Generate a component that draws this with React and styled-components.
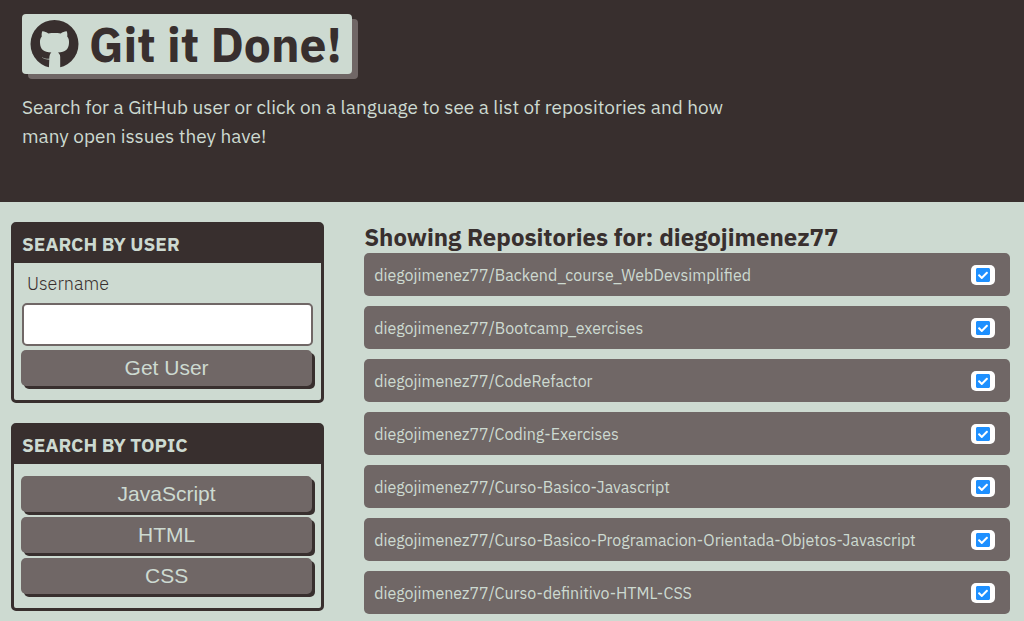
import React from "react";
import styled, { createGlobalStyle } from "styled-components";
import { FaCheckSquare } from "react-icons/fa";

const dark = "#382f2e";
const mid = "#706766";
const light = "#cddad1";

const GlobalStyle = createGlobalStyle`
  *, *::before, *::after { box-sizing: border-box; }
  body {
    margin: 0;
    background: ${light};
    color: ${dark};
    font-family: "IBM Plex Sans", "Open Sans", sans-serif;
    overflow-x: hidden;
  }
  h1, h2, h3, p, ul { margin: 0; padding: 0; }
`;

const Hero = styled.header`
  background: ${dark};
  color: ${light};
  min-height: 202px;
  padding: 14px 22px;
`;

const AppTitle = styled.h1`
  display: flex;
  align-items: center;
  gap: 10px;
  width: fit-content;
  height: 60px;
  padding: 0 10px 0 8px;
  border-radius: 4px;
  background: ${light};
  box-shadow: 6px 5px 0 ${mid};
  color: ${dark};
  font-size: 48px;
  font-weight: 700;
  line-height: 60px;
  white-space: nowrap;
`;

const Logo = styled.svg`
  width: 49px;
  height: 48px;
  flex: none;
`;

const Intro = styled.p`
  max-width: 720px;
  margin-top: 19px;
  font-size: 19px;
  line-height: 29px;
`;

const Layout = styled.main`
  display: grid;
  grid-template-columns: 32fr 66fr;
  gap: 40px;
  align-items: start;
  padding: 20px 14px 20px 11px;
`;

const Sidebar = styled.div`
  display: grid;
  gap: 20px;
`;

const Card = styled.section`
  border: 3px solid ${dark};
  border-radius: 5px;
  padding-bottom: 14px;
`;

const CardTitle = styled.h3`
  padding: 6px 8px;
  background: ${dark};
  color: ${light};
  font-size: 19px;
  font-weight: 700;
  line-height: 26px;
  text-transform: uppercase;
`;

const UserForm = styled.form`
  display: flex;
  flex-direction: column;
  padding: 8px 9px 0 7px;
`;

const FieldLabel = styled.label`
  padding: 0 6px;
  font-size: 18px;
  font-weight: 300;
  line-height: 26px;
`;

const TextField = styled.input`
  height: 43px;
  margin: 6px -1px 4px 1px;
  padding: 0 10px;
  border: 2px solid ${mid};
  border-radius: 5px;
  background: #fff;
  color: ${dark};
  font: inherit;
`;

const Button = styled.button`
  width: 100%;
  height: 36px;
  padding: 0;
  border: 0;
  border-radius: 5px;
  background: ${mid};
  box-shadow: 3px 3px 0 ${dark};
  color: ${light};
  font-family: "Liberation Sans", Arial, sans-serif;
  font-size: 21px;
  line-height: 36px;
  cursor: pointer;
`;

const TopicList = styled.div`
  display: grid;
  gap: 5px;
  padding: 12px 9px 0 7px;
`;

const Results = styled.section`
  min-width: 0;
`;

const ResultsTitle = styled.h2`
  font-size: 24px;
  font-weight: 700;
  line-height: 31px;
`;

const RepoList = styled.ul`
  display: grid;
  gap: 10px;
  list-style: none;
`;

const RepoItem = styled.li`
  display: flex;
`;

const RepoLink = styled.a`
  flex: 1;
  display: flex;
  align-items: center;
  justify-content: space-between;
  min-height: 43px;
  padding: 0 15px 0 10px;
  border-radius: 5px;
  background: ${mid};
  color: ${light};
  font-size: 16px;
  line-height: 24px;
  text-decoration: none;
`;

const Status = styled.span`
  display: flex;
  align-items: center;
  justify-content: center;
  flex: none;
  width: 24px;
  height: 20px;
  border-radius: 5px;
  background: #fff;
  color: #1e90ff;
  font-size: 16px;
`;

const topics = ["JavaScript", "HTML", "CSS"];
const user = "diegojimenez77";
const repos = [
  "Backend_course_WebDevsimplified",
  "Bootcamp_exercises",
  "CodeRefactor",
  "Coding-Exercises",
  "Curso-Basico-Javascript",
  "Curso-Basico-Programacion-Orientada-Objetos-Javascript",
  "Curso-definitivo-HTML-CSS",
];

function GithubMark() {
  return (
    <Logo viewBox="0 0 49 48" aria-hidden="true">
      <circle cx="24.5" cy="24" r="24" fill={dark} />
      <path
        fill={light}
        d="M12.3 11.2 C14 11 16.3 12 18.3 13.4 C22.3 12.8 26.7 12.8 30.7 13.4 C32.7 12 35 11 36.7 11.2 C37.4 13 37.5 14.8 37.2 16.5 C38.6 18.1 39.2 20.3 39 23 C38.7 29.3 35.5 32 28 32.5 C29.5 33.6 30.2 35 30.2 37 V48 H18.9 L19.3 39.4 C16.2 39.6 14.2 39.2 12 37.6 L12.3 37.2 C14.4 38.5 16.4 38.9 19.3 38.7 C19.3 35.7 19.9 33.7 21.4 32.5 C13.5 32 10.3 29.3 10 23 C9.8 20.3 10.4 18.1 11.8 16.5 C11.5 14.8 11.6 13 12.3 11.2 Z"
      />
    </Logo>
  );
}

export default function App() {
  return (
    <>
      <GlobalStyle />
      <Hero>
        <AppTitle>
          <GithubMark />
          Git it Done!
        </AppTitle>
        <Intro>
          Search for a GitHub user or click on a language to see a list of
          repositories and how many open issues they have!
        </Intro>
      </Hero>
      <Layout>
        <Sidebar>
          <Card>
            <CardTitle>Search by User</CardTitle>
            <UserForm onSubmit={(e) => e.preventDefault()}>
              <FieldLabel htmlFor="username">Username</FieldLabel>
              <TextField id="username" name="username" type="text" />
              <Button type="submit">Get User</Button>
            </UserForm>
          </Card>
          <Card>
            <CardTitle>Search by Topic</CardTitle>
            <TopicList>
              {topics.map((topic) => (
                <Button key={topic} type="button">{topic}</Button>
              ))}
            </TopicList>
          </Card>
        </Sidebar>
        <Results>
          <ResultsTitle>Showing Repositories for: {user}</ResultsTitle>
          <RepoList>
            {repos.map((repo) => (
              <RepoItem key={repo}>
                <RepoLink href="#">
                  <span>{`${user}/${repo}`}</span>
                  <Status><FaCheckSquare aria-hidden="true" /></Status>
                </RepoLink>
              </RepoItem>
            ))}
          </RepoList>
        </Results>
      </Layout>
    </>
  );
}
